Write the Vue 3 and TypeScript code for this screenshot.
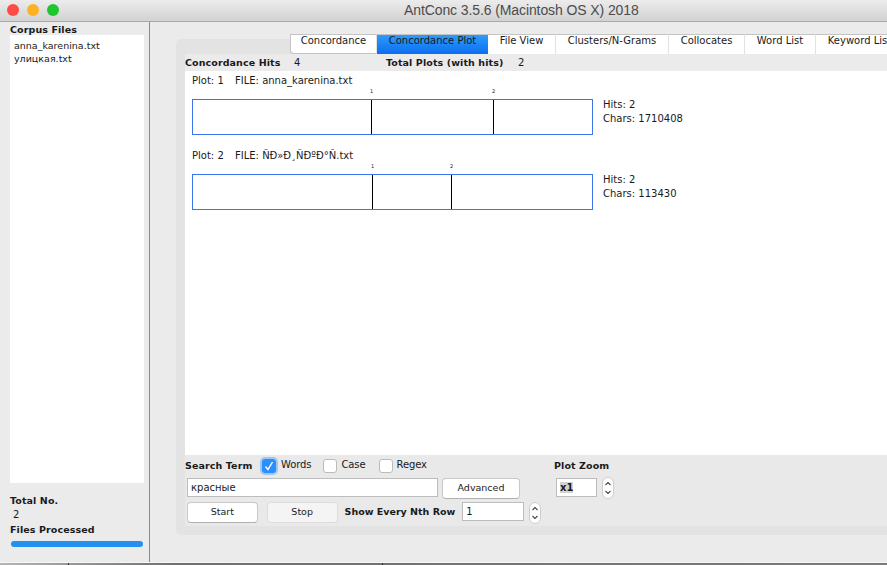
<template>
	<div class="window">
		<header class="titlebar">
			<div class="lights">
				<span class="light red"></span>
				<span class="light yellow"></span>
				<span class="light green"></span>
			</div>
			<span class="title">AntConc 3.5.6 (Macintosh OS X) 2018</span>
		</header>

		<div class="body">
			<aside class="sidebar">
				<div class="label">Corpus Files</div>
				<ul class="file-list">
					<li v-for="file in corpusFiles" :key="file">{{ file }}</li>
				</ul>
				<div class="label total">Total No.</div>
				<div class="total-value">2</div>
				<div class="label">Files Processed</div>
				<div class="progress"></div>
			</aside>

			<main class="main">
				<nav class="tabs">
					<button
						v-for="tab in tabs"
						:key="tab.name"
						class="tab"
						:class="{ active: tab.name === 'Concordance Plot' }"
						:style="{ width: tab.width + 'px' }"
					>
						{{ tab.name }}
					</button>
				</nav>

				<section class="pane">
					<div class="hits-row">
						<span class="label hits-label">Concordance Hits</span>
						<span class="hits-value">4</span>
						<span class="label plots-label">Total Plots (with hits)</span>
						<span class="plots-value">2</span>
					</div>

					<div class="plots">
						<div v-for="plot in plots" :key="plot.id" class="plot">
							<div class="plot-title">
								<span class="plot-no">Plot: {{ plot.id }}</span>
								<span>FILE: {{ plot.file }}</span>
							</div>
							<div class="plot-row">
								<div class="plot-box">
									<template v-for="(mark, i) in plot.marks" :key="mark">
										<span class="tick-no" :style="{ left: mark + 'px' }">{{ i + 1 }}</span>
										<span class="tick" :style="{ left: mark + 'px' }"></span>
									</template>
								</div>
								<div class="plot-info">
									<div>Hits: {{ plot.marks.length }}</div>
									<div>Chars: {{ plot.chars }}</div>
								</div>
							</div>
						</div>
					</div>

					<div class="controls">
						<div class="controls-left">
							<div class="search-row">
								<span class="label search-label">Search Term</span>
								<label class="check words">
									<span class="box checked">
										<svg width="10" height="10" viewBox="0 0 10 10">
											<path d="M1.5 5.5 L4 8.5 L8.5 1" fill="none" stroke="#fff" stroke-width="1.4" />
										</svg>
									</span>
									<span class="check-text">Words</span>
								</label>
								<label class="check case"><span class="box"></span><span class="check-text">Case</span></label>
								<label class="check regex"><span class="box"></span><span class="check-text">Regex</span></label>
							</div>
							<div class="term-row">
								<div class="input term">красные</div>
								<button class="btn advanced">Advanced</button>
							</div>
							<div class="action-row">
								<button class="btn start">Start</button>
								<button class="btn stop">Stop</button>
								<span class="label nth-label">Show Every Nth Row</span>
								<div class="input nth">1</div>
								<div class="spinner">
									<svg width="12" height="22" viewBox="0 0 12 22">
										<path d="M3.5 8 L6 5.5 L8.500 8 M3.500 14 L6 16.500 L8.500 14" fill="none" stroke="#444" stroke-width="1.1" />
									</svg>
								</div>
							</div>
						</div>
						<div class="controls-right">
							<div class="label zoom-label">Plot Zoom</div>
							<div class="zoom-row">
								<div class="input zoom"><span class="selected">x1</span></div>
								<div class="spinner">
									<svg width="12" height="22" viewBox="0 0 12 22">
										<path d="M3.5 8 L6 5.5 L8.500 8 M3.500 14 L6 16.500 L8.500 14" fill="none" stroke="#444" stroke-width="1.1" />
									</svg>
								</div>
							</div>
						</div>
					</div>
				</section>
			</main>
		</div>

		<div class="desktop">
			<span class="desktop-tick first"></span>
			<span class="desktop-tick second"></span>
		</div>
	</div>
</template>

<script setup lang="ts">
const corpusFiles = ['anna_karenina.txt', 'улицкая.txt']

const tabs = [
	{ name: 'Concordance', width: 87 },
	{ name: 'Concordance Plot', width: 111 },
	{ name: 'File View', width: 68 },
	{ name: 'Clusters/N-Grams', width: 113 },
	{ name: 'Collocates', width: 76 },
	{ name: 'Word List', width: 71 },
	{ name: 'Keyword List', width: 88 },
]

const plots = [
	{ id: 1, file: 'anna_karenina.txt', marks: [178, 300], chars: 1710408 },
	{ id: 2, file: 'ÑÐ»Ð¸ÑÐºÐ°Ñ.txt', marks: [179, 258], chars: 113430 },
]
</script>

<style>
html,
body {
	margin: 0;
	background: #ebebeb;
}
</style>

<style scoped>
.window {
	width: 887px;
	height: 565px;
	overflow: hidden;
	display: flex;
	flex-direction: column;
	background: #ebebeb;
	font-family: 'DejaVu Sans', sans-serif;
	font-size: 10px;
	color: #1a1a1a;
}

.titlebar {
	height: 22px;
	flex: none;
	box-sizing: border-box;
	display: flex;
	align-items: center;
	padding-bottom: 2px;
	background: linear-gradient(#ececec, #d2d2d2);
	border-bottom: 1px solid #a9a9a9;
}

.lights {
	display: flex;
	gap: 8px;
	padding-left: 7px;
}

.light {
	width: 12px;
	height: 12px;
	border-radius: 50%;
}

.red { background: #fc4e46; }
.yellow { background: #fdb224; }
.green { background: #1ec72f; }

.title {
	margin-left: 345px;
	font-family: 'Liberation Sans', sans-serif;
	font-size: 14px;
	letter-spacing: -0.1px;
	color: #4c4c4c;
	white-space: nowrap;
}

.body {
	flex: 1;
	display: flex;
	min-height: 0;
	border-bottom: 1px solid #f7f7f7;
}

.desktop {
	position: relative;
	height: 2px;
	flex: none;
	background: linear-gradient(90deg, #b5b5b5, #6f6f6f 20%, #7a7a7a);
}

.desktop-tick {
	position: absolute;
	top: 0;
	width: 1px;
	height: 2px;
	background: #333;
}

.desktop-tick.first { left: 68px; }
.desktop-tick.second { left: 382px; }

.label {
	font-size: 9.5px;
	font-weight: 700;
	letter-spacing: 0.1px;
	white-space: nowrap;
}

.sidebar {
	width: 150px;
	flex: none;
	box-sizing: border-box;
	padding: 2px 5px 0 10px;
	border-right: 1px solid #8a8a8a;
}

.file-list {
	list-style: none;
	margin: 0;
	padding: 4px;
	height: 440px;
	background: #fff;
	font-size: 9.5px;
	line-height: 13px;
}

.total {
	margin-top: 12px;
}

.total-value {
	padding: 2px 0 3px 3px;
	line-height: 13px;
}

.progress {
	width: 132px;
	height: 6px;
	margin: 6px 0 0 1px;
	border-radius: 3px;
	background: #2490f0;
}

.main {
	flex: 1;
	min-width: 0;
	padding: 12px 0 0 26px;
}

.tabs {
	position: relative;
	z-index: 1;
	display: flex;
	height: 20px;
	margin-left: 114px;
	width: 640px;
}

.tab {
	flex: none;
	box-sizing: border-box;
	height: 20px;
	padding: 0 0 8px;
	font: inherit;
	color: #1a1a1a;
	background: #fff;
	border: none;
	border-top: 1px solid #c4c4c4;
	border-right: 1px solid #e2e2e2;
	white-space: nowrap;
}

.tab:first-child {
	border-left: 1px solid #c4c4c4;
	border-bottom: 1px solid #c4c4c4;
	border-radius: 0 0 0 4px;
}

.tab.active {
	background: linear-gradient(#2f9bfb, #0b6ef0);
	border-right: none;
}

.pane {
	width: 720px;
	height: 496px;
	margin-top: -15px;
	box-sizing: border-box;
	padding: 15px 0 9px 9px;
	background: #e3e3e3;
	border-radius: 5px 0 0 5px;
	display: flex;
	flex-direction: column;
}

.hits-row {
	height: 17px;
	flex: none;
	display: flex;
	align-items: center;
	background: #ebebeb;
}

.hits-label { width: 109px; }
.hits-value { width: 92px; }
.plots-label { width: 132px; }

.plots {
	flex: 1;
	min-height: 0;
	background: #fff;
	padding: 3px 0 0 7px;
}

.plot {
	height: 75px;
}

.plot-title {
	display: flex;
	gap: 10px;
	height: 13px;
	line-height: 13px;
}

.plot-no {
	width: 33px;
}

.plot-row {
	display: flex;
	align-items: flex-start;
	margin-top: 12px;
}

.plot-box {
	position: relative;
	width: 401px;
	height: 36px;
	box-sizing: border-box;
	border: 1px solid #3d74ee;
	flex: none;
}

.tick {
	position: absolute;
	top: 0;
	bottom: 0;
	width: 1px;
	background: #000;
}

.tick-no {
	position: absolute;
	top: -12px;
	font-size: 5px;
	line-height: 7px;
	transform: translateX(-1px);
}

.plot-info {
	margin-left: 10px;
	margin-top: -1px;
	line-height: 14px;
}

.controls {
	flex: none;
	height: 71px;
	box-sizing: border-box;
	display: flex;
	background: #e9e9e9;
	padding: 2px 0 0 2px;
}

.controls-left {
	width: 354px;
	flex: none;
}

.search-row {
	display: flex;
	align-items: center;
	height: 17px;
	margin-left: -2px;
}

.search-label { width: 77px; }

.check {
	display: flex;
	align-items: center;
	gap: 4px;
	letter-spacing: -0.1px;
}

.check-text {
	margin-top: -2px;
}

.check.words { gap: 5px; }
.check.case { margin-left: 12px; }
.check.regex { margin-left: 13px; }

.box {
	width: 14px;
	height: 14px;
	box-sizing: border-box;
	display: flex;
	align-items: center;
	justify-content: center;
	background: #fff;
	border: 1px solid #bcbcbc;
	border-radius: 3px;
}

.box.checked {
	background: #2a8ffa;
	border-color: #2a8ffa;
	box-shadow: 0 0 0 2px #9cc6f5;
}

.term-row {
	display: flex;
	gap: 4px;
	margin-top: 4px;
	height: 21px;
}

.input {
	box-sizing: border-box;
	height: 19px;
	padding: 2px 3px;
	line-height: 13px;
	background: #fff;
	border: 1px solid #bdbdbd;
}

.term { width: 251px; }

.btn {
	box-sizing: border-box;
	height: 21px;
	padding: 0 0 2px;
	font: inherit;
	font-size: 9.5px;
	color: #1a1a1a;
	background: #fff;
	border: 1px solid #c8c8c8;
	border-bottom-color: #b0b0b0;
	border-radius: 4px;
}

.advanced { width: 78px; }

.action-row {
	display: flex;
	align-items: flex-start;
	margin-top: 3px;
}

.start { width: 71px; }

.stop {
	width: 71px;
	margin-left: 9px;
	background: #f4f4f4;
	border-color: #dcdcdc;
}

.nth-label {
	width: 118px;
	margin-left: 7px;
	line-height: 19px;
	letter-spacing: 0;
}

.nth { width: 62px; }

.spinner {
	box-sizing: border-box;
	width: 12px;
	height: 22px;
	margin-left: 5px;
	background: #fff;
	border: 1px solid #cdcdcd;
	border-radius: 6px;
	display: flex;
	align-items: center;
	justify-content: center;
	overflow: hidden;
}

.spinner svg {
	flex: none;
}

.controls-right {
	flex: none;
	padding-left: 13px;
}

.zoom-label {
	line-height: 17px;
}

.zoom-row {
	display: flex;
	margin-top: 4px;
	padding-left: 2px;
	align-items: flex-start;
}

.zoom { width: 41px; }

.zoom-row .spinner {
	margin-top: -1px;
}

.selected {
	background: #d3d3d3;
	font-weight: 700;
}
</style>
